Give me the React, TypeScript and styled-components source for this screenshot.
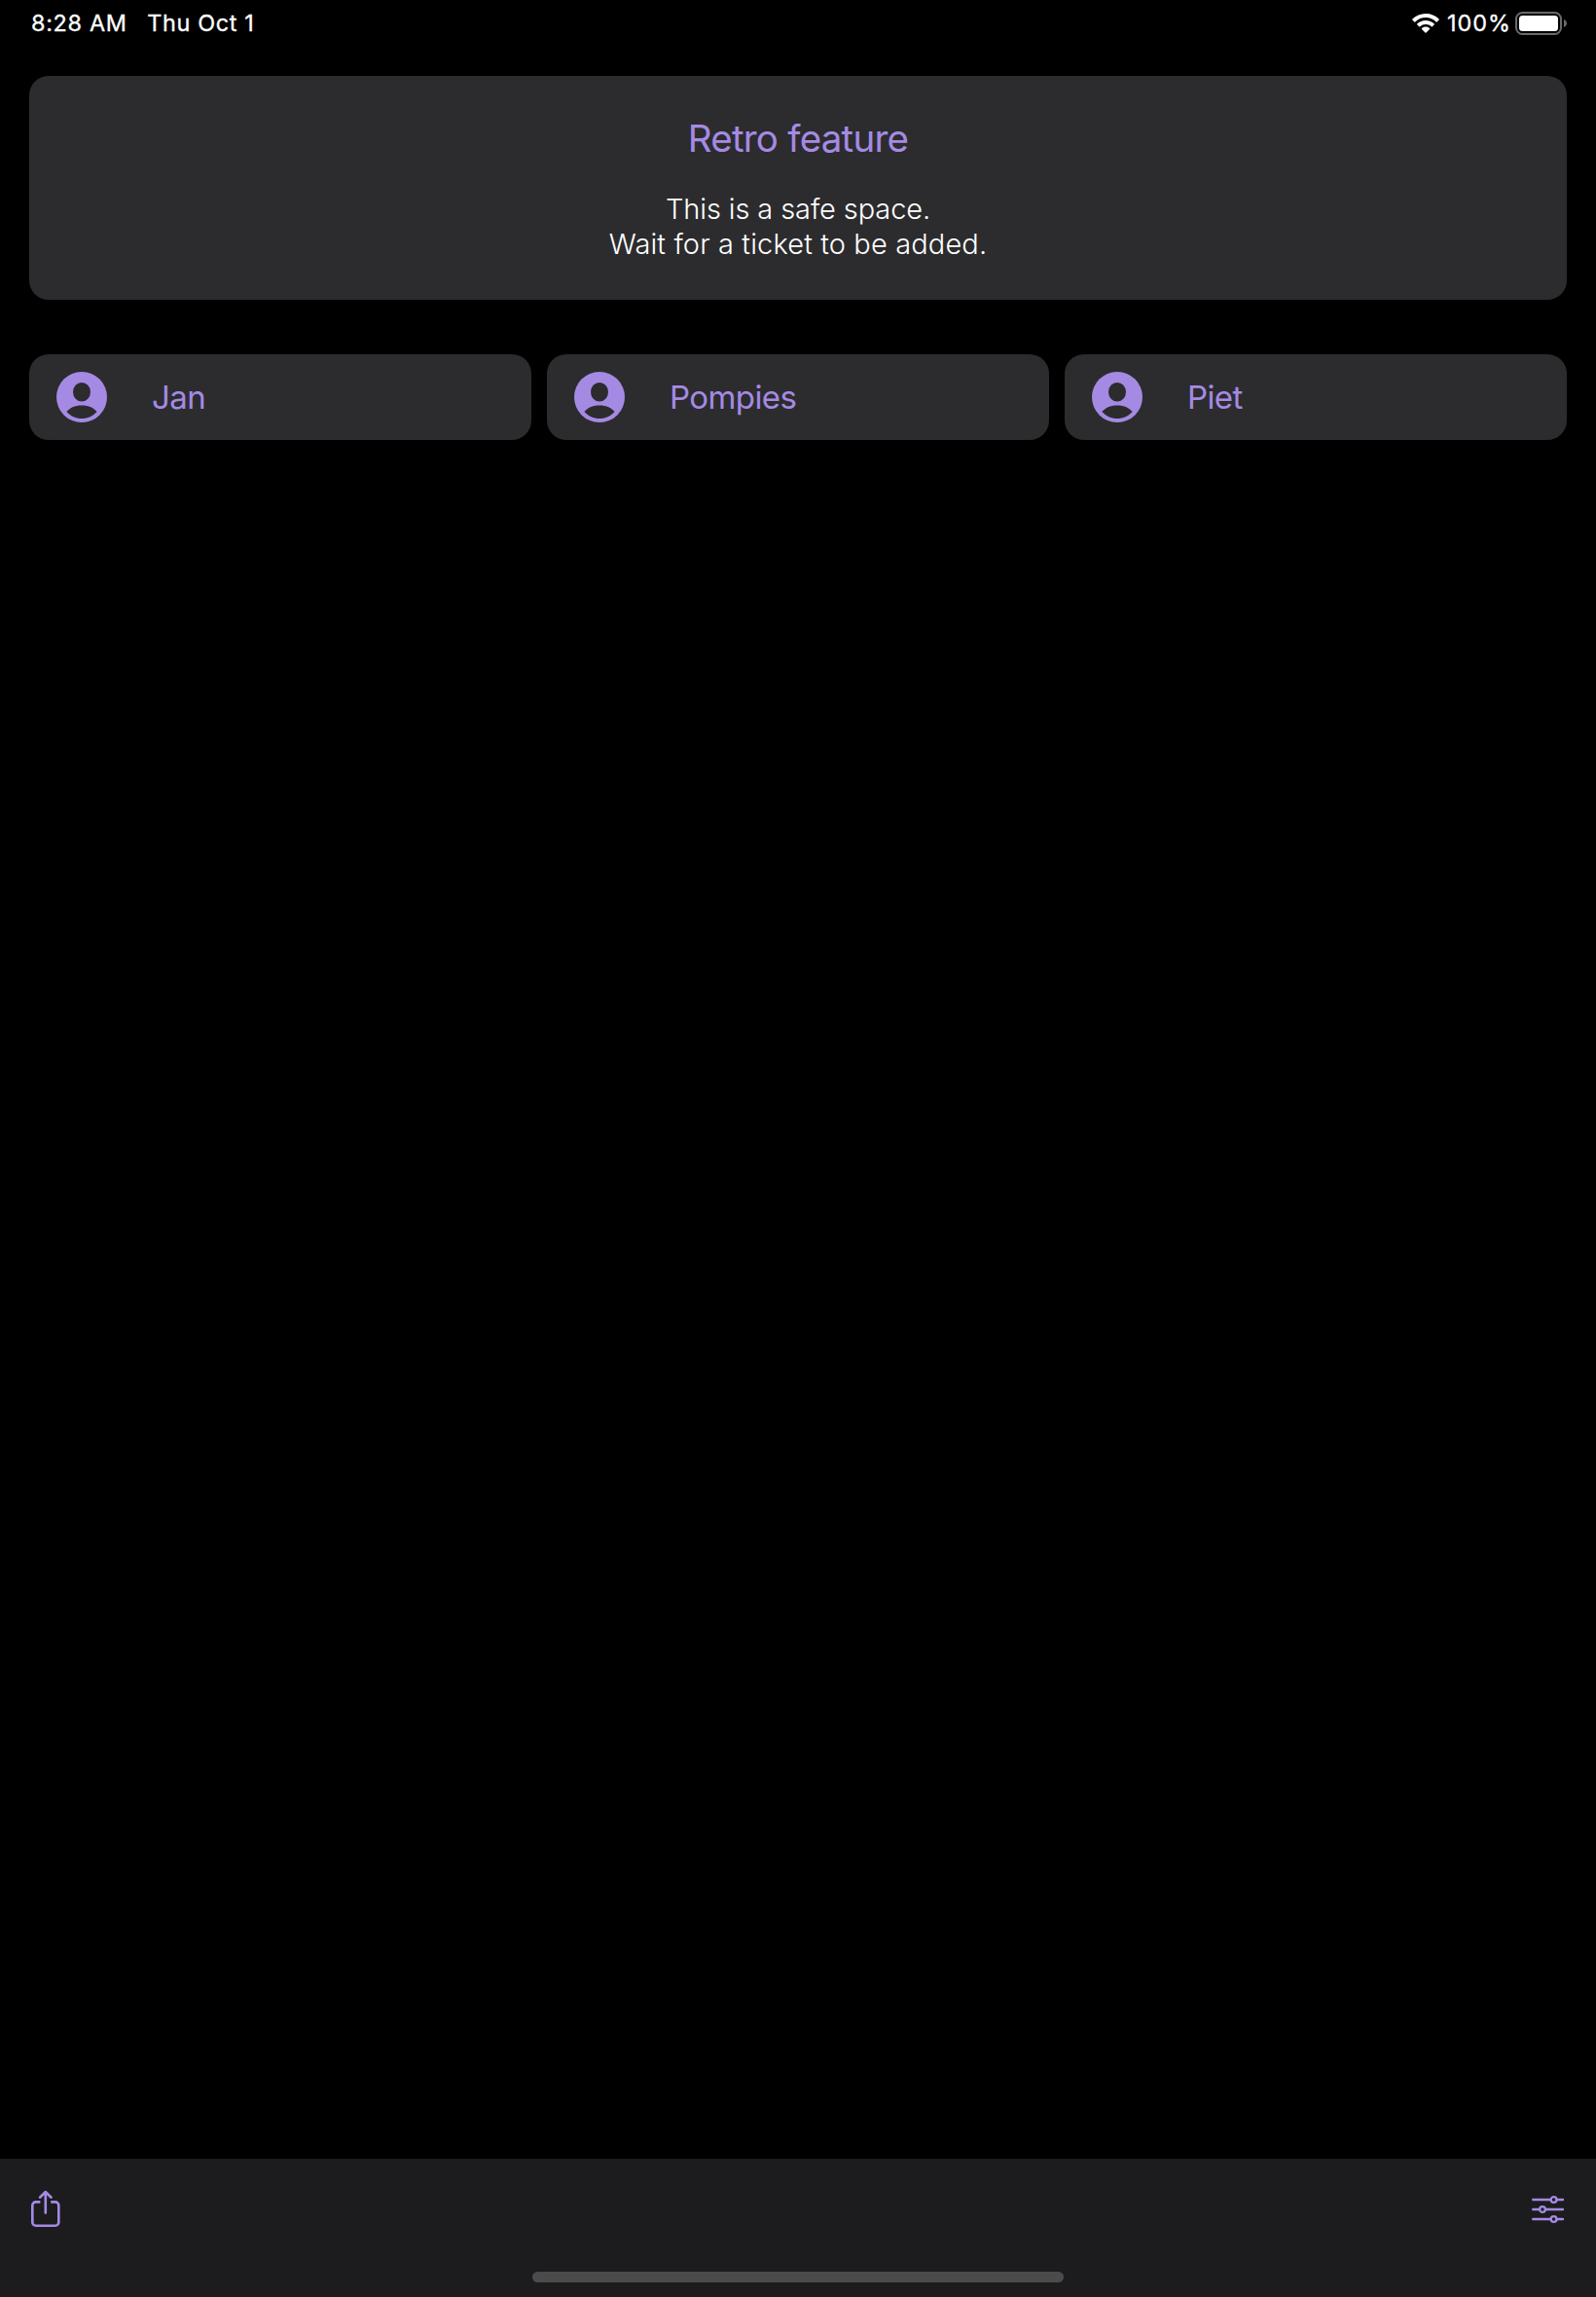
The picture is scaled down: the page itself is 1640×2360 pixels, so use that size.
import React from "react";
import styled, { createGlobalStyle } from "styled-components";

const ACCENT = "#a58ae4";
const CARD = "#2c2c2e";
const BAR = "#1c1c1e";

const GlobalStyle = createGlobalStyle`
  * { box-sizing: border-box; }
  body { margin: 0; background: #000; }
`;

const Screen = styled.div`
  display: flex;
  flex-direction: column;
  width: 100%;
  height: 2360px;
  background: #000;
  color: #fff;
  font-family: Inter, "Liberation Sans", sans-serif;
`;

const StatusBar = styled.header`
  display: flex;
  justify-content: space-between;
  height: 78px;
  padding: 0 30px 0 32px;
  font-size: 23.4px;
  font-weight: 400;
  line-height: 46px;
  -webkit-text-stroke: 0.3px #fff;
`;

const StatusGroup = styled.div<{ $gap: number }>`
  display: flex;
  align-items: center;
  gap: ${(p) => p.$gap}px;
  height: 48px;
  white-space: nowrap;
`;

const StatusText = styled.span<{ $tracking: number }>`
  letter-spacing: ${(p) => p.$tracking}px;
`;

const Icon = styled.svg`
  display: block;
  flex: none;
`;

const Main = styled.main`
  flex: 1;
  padding: 0 30px;
`;

const TicketCard = styled.section`
  height: 230px;
  padding-top: 40px;
  border-radius: 20px;
  background: ${CARD};
  text-align: center;
`;

const Title = styled.h1`
  margin: 0;
  color: ${ACCENT};
  font-size: 38.5px;
  font-weight: 400;
  line-height: 48px;
  letter-spacing: -0.75px;
`;

const Message = styled.p`
  margin: 31px 0 0;
  font-size: 29px;
  font-weight: 300;
  line-height: 36px;
`;

const Line = styled.span<{ $tracking: number }>`
  display: block;
  letter-spacing: ${(p) => p.$tracking}px;
`;

const Participants = styled.ul`
  display: grid;
  grid-template-columns: repeat(3, 1fr);
  gap: 16px;
  margin: 56px 0 0;
  padding: 0;
  list-style: none;
`;

const Participant = styled.li`
  display: flex;
  align-items: center;
  gap: 46px;
  height: 88px;
  padding: 0 28px;
  border-radius: 20px;
  background: ${CARD};
`;

const Name = styled.span`
  color: ${ACCENT};
  font-size: 33px;
  font-weight: 400;
  line-height: 40px;
  letter-spacing: -0.6px;
`;

const BottomBar = styled.footer`
  display: flex;
  flex-direction: column;
  justify-content: space-between;
  align-items: center;
  height: 142px;
  padding-bottom: 15px;
  background: ${BAR};
`;

const Toolbar = styled.nav`
  display: flex;
  justify-content: space-between;
  align-items: center;
  width: 100%;
  height: 104px;
  padding: 0 32px 0 31px;
`;

const ToolButton = styled.button`
  margin: 0;
  padding: 0;
  border: 0;
  background: none;
  color: ${ACCENT};
`;

const HomeIndicator = styled.div`
  width: 546px;
  height: 11px;
  border-radius: 6px;
  background: #4b4b4b;
`;

const WifiGlyph = styled(Icon)`
  margin-right: 4.5px;
`;

const WifiIcon = () => (
  <WifiGlyph width="28" height="20" viewBox="0 0 28 20">
    <g fill="#fff">
      <path d="M14 0C8.700 0 3.900 2.100.4 5.500a.6.6 0 0 0 0 .9l2 2a.6.6 0 0 0 .9 0A15.400 15.400 0 0 1 14 4.100c4.200 0 8 1.700 10.700 4.300a.6.600 0 0 0 .9 0l2-2a.6.6 0 0 0 0-.9A19.500 19.500 0 0 0 14 0Z" />
      <path d="M14 6.900c-3.400 0-6.500 1.300-8.800 3.500a.6.6 0 0 0 0 .9l2 2a.6.6 0 0 0 .9 0A8.600 8.600 0 0 1 14 11c2.300 0 4.300.9 5.900 2.300a.6.6 0 0 0 .9 0l2-2a.6.6 0 0 0 0-.9A12.700 12.700 0 0 0 14 6.900Z" />
      <path d="M14 13.600c-1.600 0-3 .6-4 1.500a.6.600 0 0 0 0 .9l3.500 3.500a.7.7 0 0 0 1 0L18 16a.6.600 0 0 0 0-.9c-1-.9-2.400-1.500-4-1.500Z" />
    </g>
  </WifiGlyph>
);

const BatteryIcon = () => (
  <Icon width="53" height="24" viewBox="0 0 53 24">
    <rect x="1" y="1" width="46" height="22" rx="6.500" fill="none" stroke="#6a6a6a" strokeWidth="2" />
    <rect x="4" y="4" width="40" height="16" rx="3.500" fill="#fff" />
    <path d="M50 8c1.800.7 3 2.200 3 4s-1.200 3.300-3 4Z" fill="#6a6a6a" />
  </Icon>
);

const AvatarIcon = () => (
  <Icon width="52" height="52" viewBox="0 0 52 52">
    <circle cx="26" cy="26" r="26" fill={ACCENT} />
    <ellipse cx="26" cy="20.800" rx="9" ry="9.800" fill={CARD} />
    <path d="M10.400 41C13.400 37.200 19 34.500 26 34.500s12.600 2.700 15.600 6.500C37.500 45.600 32.200 48 26 48s-11.500-2.400-15.600-7Z" fill={CARD} />
  </Icon>
);

const ShareIcon = () => (
  <Icon width="32" height="40" viewBox="0 0 32 40" fill="none" stroke="currentColor" strokeWidth="2.600" strokeLinecap="round" strokeLinejoin="round">
    <path d="M10.400 12.400H5.800a3.500 3.500 0 0 0-3.500 3.500v17.300a3.500 3.500 0 0 0 3.500 3.500h20a3.500 3.500 0 0 0 3.500-3.500V15.900a3.500 3.500 0 0 0-3.500-3.500h-4.600" strokeLinecap="butt" />
    <path d="M15.800 23.600V2.200M10 7.700l5.800-5.700 5.800 5.700" />
  </Icon>
);

const sliders = [
  { y: 4, knob: 22.6 },
  { y: 14, knob: 11 },
  { y: 24, knob: 22.6 },
];

const SlidersIcon = () => (
  <Icon width="34" height="28" viewBox="0 0 34 28" fill="none" stroke="currentColor" strokeWidth="2.500" strokeLinecap="round">
    {sliders.map(({ y, knob }) => (
      <React.Fragment key={y}>
        <path d={`M1.300 ${y}H${knob - 3}M${knob + 3} ${y}H31.900`} />
        <circle cx={knob} cy={y} r="2.900" strokeWidth="2.200" />
      </React.Fragment>
    ))}
  </Icon>
);

const participants = ["Jan", "Pompies", "Piet"];

export default function App() {
  return (
    <Screen>
      <GlobalStyle />
      <StatusBar>
        <StatusGroup $gap={20.5}>
          <StatusText $tracking={0.7}>8:28 AM</StatusText>
          <StatusText $tracking={0.65}>Thu Oct 1</StatusText>
        </StatusGroup>
        <StatusGroup $gap={4}>
          <WifiIcon />
          <StatusText $tracking={1}>100%</StatusText>
          <BatteryIcon />
        </StatusGroup>
      </StatusBar>
      <Main>
        <TicketCard>
          <Title>Retro feature</Title>
          <Message>
            <Line $tracking={-0.11}>This is a safe space.</Line>
            <Line $tracking={0.13}>Wait for a ticket to be added.</Line>
          </Message>
        </TicketCard>
        <Participants>
          {participants.map((name) => (
            <Participant key={name}>
              <AvatarIcon />
              <Name>{name}</Name>
            </Participant>
          ))}
        </Participants>
      </Main>
      <BottomBar>
        <Toolbar>
          <ToolButton aria-label="Share">
            <ShareIcon />
          </ToolButton>
          <ToolButton aria-label="Settings">
            <SlidersIcon />
          </ToolButton>
        </Toolbar>
        <HomeIndicator />
      </BottomBar>
    </Screen>
  );
}
